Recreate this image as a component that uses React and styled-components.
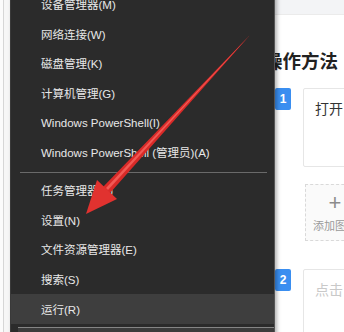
import React from 'react';
import styled, { createGlobalStyle } from 'styled-components';

const GlobalStyle = createGlobalStyle`
  *, *::before, *::after { box-sizing: border-box; }
  body {
    margin: 0;
    background: #ffffff;
    overflow: hidden;
    font-family: "Liberation Sans", "Noto Sans CJK SC", sans-serif;
  }
`;

const Screen = styled.div`
  position: relative;
  width: 344px;
  height: 332px;
  overflow: hidden;
  display: flex;
  background: #ffffff;
`;

const Gutter = styled.div`
  flex: none;
  width: 10px;
  background: linear-gradient(to right, #fbfbfb 3px, #d6d6d6 3px, #d6d6d6 4px, #f6f6f6 4px);
`;

const Page = styled.div`
  flex: 1;
  min-width: 0;
  overflow: hidden;
  display: flex;
  flex-direction: column;
  font-family: "Noto Sans CJK SC", "Liberation Sans", sans-serif;
`;

const TopBar = styled.div`
  flex: none;
  height: 15px;
  background: #f3f4f6;
  border-bottom: 1px solid #ebebeb;
`;

const Content = styled.div`
  flex: none;
  padding-left: 254px;
  display: flex;
  flex-direction: column;
`;

const Heading = styled.h2`
  margin: 33px 0 0;
  font-size: 18.5px;
  line-height: 24px;
  font-weight: 700;
  color: #222;
  white-space: nowrap;
`;

const Step = styled.div`
  flex: none;
  display: flex;
  align-items: flex-start;
  margin-top: ${({ $gap }) => $gap}px;
`;

const Badge = styled.div`
  flex: none;
  width: 16px;
  height: 22px;
  margin-left: 11px;
  border-radius: 2px;
  background: #3a8ef0;
  color: #fff;
  font-family: "Liberation Sans", sans-serif;
  font-weight: 700;
  font-size: 12px;
  display: flex;
  align-items: center;
  justify-content: center;
`;

const StepBody = styled.div`
  flex: none;
  margin-left: 12px;
  display: flex;
  flex-direction: column;
`;

const Card = styled.div`
  flex: none;
  width: 140px;
  height: ${({ $h }) => $h}px;
  border: 1px solid #e6e6e6;
  border-radius: 2px;
  padding: 9px 11px;
  font-size: 14px;
  line-height: 20px;
  color: ${({ $placeholder }) => ($placeholder ? '#c9c9c9' : '#333')};
  white-space: nowrap;
`;

const AddBox = styled.div`
  flex: none;
  margin: 17px 0 0 2px;
  width: 60px;
  height: 57px;
  border: 1px dashed #d9d9d9;
  background: #fafafa;
  display: flex;
  flex-direction: column;
  align-items: center;
  color: #999;
`;

const Plus = styled.span`
  margin-top: 5px;
  font-family: "Liberation Sans", sans-serif;
  font-size: 22px;
  font-weight: 300;
  line-height: 26px;
  color: #8c8c8c;
`;

const AddLabel = styled.span`
  margin-top: 2px;
  font-size: 11px;
  line-height: 14px;
  white-space: nowrap;
`;

const Menu = styled.div`
  position: absolute;
  top: -11px;
  left: 10px;
  width: 265px;
  background: #2b2b2b;
  border-left: 1px solid #3a3a3a;
  border-right: 1px solid #555;
  box-shadow: 2px 0 4px rgba(0, 0, 0, 0.3);
  display: flex;
  flex-direction: column;
`;

const MenuItem = styled.div`
  height: 29.7px;
  padding-left: 30px;
  display: flex;
  align-items: center;
  font-size: 11.5px;
  color: #e8e8e8;
  white-space: nowrap;
  background: ${({ $active }) => ($active ? '#3e3e3e' : 'transparent')};
`;

const Separator = styled.div`
  height: 1px;
  margin: 5px 7px 2px 9px;
  background: #6a6a6a;
`;

const MenuFooter = styled.div`
  margin: 3px 0 0 7px;
  height: 10px;
  border-top: 1px solid #858585;
  background: #3c3c3c;
`;

const Overlay = styled.svg`
  position: absolute;
  left: 0;
  top: 0;
  pointer-events: none;
`;

const topItems = [
  '设备管理器(M)',
  '网络连接(W)',
  '磁盘管理(K)',
  '计算机管理(G)',
  'Windows PowerShell(I)',
  'Windows PowerShell (管理员)(A)',
];

const bottomItems = ['任务管理器(T)', '设置(N)', '文件资源管理器(E)', '搜索(S)', '运行(R)'];

const Arrow = () => (
  <Overlay width="344" height="332" viewBox="0 0 344 332">
    <polygon points="250,35 110,193 103,187" fill="#d92a28" />
    <polygon points="250,35 108,190 106,188" fill="#f25a55" />
    <polygon points="86,214 97,180 117,199" fill="#e1322f" />
  </Overlay>
);

export default function App() {
  return (
    <>
      <GlobalStyle />
      <Screen>
        <Gutter />
        <Page>
          <TopBar />
          <Content>
            <Heading>操作方法</Heading>
            <Step $gap={16}>
              <Badge>1</Badge>
              <StepBody>
                <Card $h={79}>打开</Card>
                <AddBox>
                  <Plus>+</Plus>
                  <AddLabel>添加图片</AddLabel>
                </AddBox>
              </StepBody>
            </Step>
            <Step $gap={28}>
              <Badge>2</Badge>
              <StepBody>
                <Card $h={100} $placeholder>点击</Card>
              </StepBody>
            </Step>
          </Content>
        </Page>
        <Menu>
          {topItems.map((t) => (
            <MenuItem key={t}>{t}</MenuItem>
          ))}
          <Separator />
          {bottomItems.map((t) => (
            <MenuItem key={t} $active={t === '运行(R)'}>
              {t}
            </MenuItem>
          ))}
          <MenuFooter />
        </Menu>
        <Arrow />
      </Screen>
    </>
  );
}
